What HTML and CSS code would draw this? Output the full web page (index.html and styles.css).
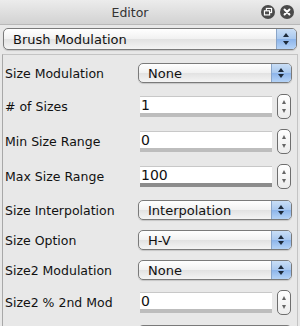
FILE: index.html
```html
<!DOCTYPE html>
<html lang="en">
<head>
<meta charset="utf-8">
<title>Editor</title>
<link rel="stylesheet" href="styles.css">
</head>
<body>
<div class="titlebar">
	<span class="title">Editor</span>
	<span class="tbtn">
		<svg width="14" height="14" viewBox="0 0 13 13"><circle cx="6.5" cy="6.5" r="6.5" fill="#4a4a4a"/><rect x="5" y="3.2" width="4.8" height="3.8" fill="none" stroke="#fff" stroke-width="1.1"/><rect x="3.2" y="5.4" width="4.8" height="3.8" fill="#4a4a4a" stroke="#fff" stroke-width="1.1"/></svg>
	</span>
	<span class="tbtn">
		<svg width="14" height="14" viewBox="0 0 13 13"><circle cx="6.5" cy="6.5" r="6.5" fill="#4a4a4a"/><path d="M4.2 4.2 L8.8 8.8 M8.8 4.2 L4.2 8.8" stroke="#fff" stroke-width="1.8" stroke-linecap="round"/></svg>
	</span>
</div>

<div class="top">
	<div class="popup wide"><span class="ptext">Brush Modulation</span><span class="parrow"></span></div>
</div>

<div class="panel">
	<div class="row prow first">
		<span class="label">Size Modulation</span>
		<div class="popup"><span class="ptext">None</span><span class="parrow"></span></div>
	</div>
	<div class="row frow">
		<span class="label"># of Sizes</span>
		<div class="field"><span class="fval">1</span><span class="fbar"></span></div>
		<span class="stepper"><i class="up"></i><i class="down"></i></span>
	</div>
	<div class="row frow">
		<span class="label">Min Size Range</span>
		<div class="field"><span class="fval">0</span><span class="fbar"></span></div>
		<span class="stepper"><i class="up"></i><i class="down"></i></span>
	</div>
	<div class="row frow">
		<span class="label">Max Size Range</span>
		<div class="field"><span class="fval">100</span><span class="fbar full"></span></div>
		<span class="stepper"><i class="up"></i><i class="down"></i></span>
	</div>
	<div class="row prow gapped">
		<span class="label">Size Interpolation</span>
		<div class="popup"><span class="ptext">Interpolation</span><span class="parrow"></span></div>
	</div>
	<div class="row prow">
		<span class="label">Size Option</span>
		<div class="popup"><span class="ptext">H-V</span><span class="parrow"></span></div>
	</div>
	<div class="row prow">
		<span class="label">Size2 Modulation</span>
		<div class="popup"><span class="ptext">None</span><span class="parrow"></span></div>
	</div>
	<div class="row frow">
		<span class="label">Size2 % 2nd Mod</span>
		<div class="field"><span class="fval">0</span><span class="fbar"></span></div>
		<span class="stepper"><i class="up"></i><i class="down"></i></span>
	</div>
	<div class="row prow">
		<span class="label"></span>
		<div class="popup"><span class="ptext"></span><span class="parrow"></span></div>
	</div>
</div>
</body>
</html>
```

FILE: styles.css
```css
body {
	margin: 0;
	background: #e8e8e8;
	font: normal 12.5px 'DejaVu Sans', sans-serif;
	color: #111;
	overflow: hidden;
}

.titlebar {
	height: 25px;
	display: flex;
	align-items: center;
	justify-content: flex-end;
	gap: 5px;
	padding-right: 6px;
	background: linear-gradient(#ececec, #d2d2d2);
	border-bottom: 1px solid #b8b8b8;
	position: relative;
	box-sizing: border-box;
}

.title {
	position: absolute;
	left: 0;
	right: 0;
	text-align: center;
	color: #333;
	font-size: 12.5px;
	margin-left: -40px;
}

.tbtn {
	display: flex;
	position: relative;
}

.top {
	padding: 3px 3px 4px 3px;
}

.popup {
	height: 20px;
	width: 154px;
	box-sizing: border-box;
	border: 1px solid #7a7a7a;
	border-radius: 5px;
	background: linear-gradient(#ffffff, #f1f1f1 50%, #e2e2e2 51%, #f4f4f4);
	display: flex;
	align-items: center;
	overflow: hidden;
	box-shadow: 0 1px 1px rgba(0,0,0,.15);
}

.popup.wide {
	width: 294px;
	height: 22px;
}

.ptext {
	flex: 1;
	padding-left: 9px;
	font-size: 13px;
}

.parrow {
	width: 19px;
	align-self: stretch;
	border-left: 1px solid #8aa5c8;
	background:
		linear-gradient(#c9def6, #a9c8ee 50%, #8cb4ea 51%, #b5d3f6);
	position: relative;
}

.parrow:before, .parrow:after {
	content: "";
	position: absolute;
	left: 6px;
	border-left: 3px solid transparent;
	border-right: 3px solid transparent;
}

.parrow:before {
	top: 4px;
	border-bottom: 4px solid #1d2a3a;
}

.parrow:after {
	bottom: 4px;
	border-top: 4px solid #1d2a3a;
}

.panel {
	border-top: 1px solid #c4c4c4;
	border-left: 1px solid #a8a8a8;
	border-right: 1px solid #c4c4c4;
	margin: 0 2px 0 2px;
	padding-top: 2px;
}

.row {
	display: flex;
	align-items: center;
	padding-left: 2px;
}

.prow {
	height: 30px;
}

.prow.first {
	height: 32px;
}

.frow {
	height: 35px;
}

.gapped {
	margin-top: 1px;
}

.label {
	width: 133px;
}

.field {
	width: 132px;
	height: 21px;
	margin-left: 2px;
	background: #fff;
	border-top: 1px solid #c8c8c8;
	box-sizing: border-box;
	display: flex;
	flex-direction: column;
	justify-content: flex-end;
}

.fval {
	font-size: 14px;
	line-height: 15px;
	padding-left: 1px;
}

.fbar {
	height: 4px;
	background: #bdbdbd;
}

.fbar.full {
	background: #8c8c8c;
}

.stepper {
	width: 12px;
	height: 23px;
	margin-left: 5px;
	border: 1px solid #6e6e6e;
	border-radius: 5px;
	background: linear-gradient(#ffffff, #ececec);
	position: relative;
}

.stepper i {
	position: absolute;
	left: 3.5px;
	border-left: 2.5px solid transparent;
	border-right: 2.5px solid transparent;
}

.stepper .up {
	top: 5px;
	border-bottom: 4px solid #666;
}

.stepper .down {
	bottom: 5px;
	border-top: 4px solid #666;
}
```
